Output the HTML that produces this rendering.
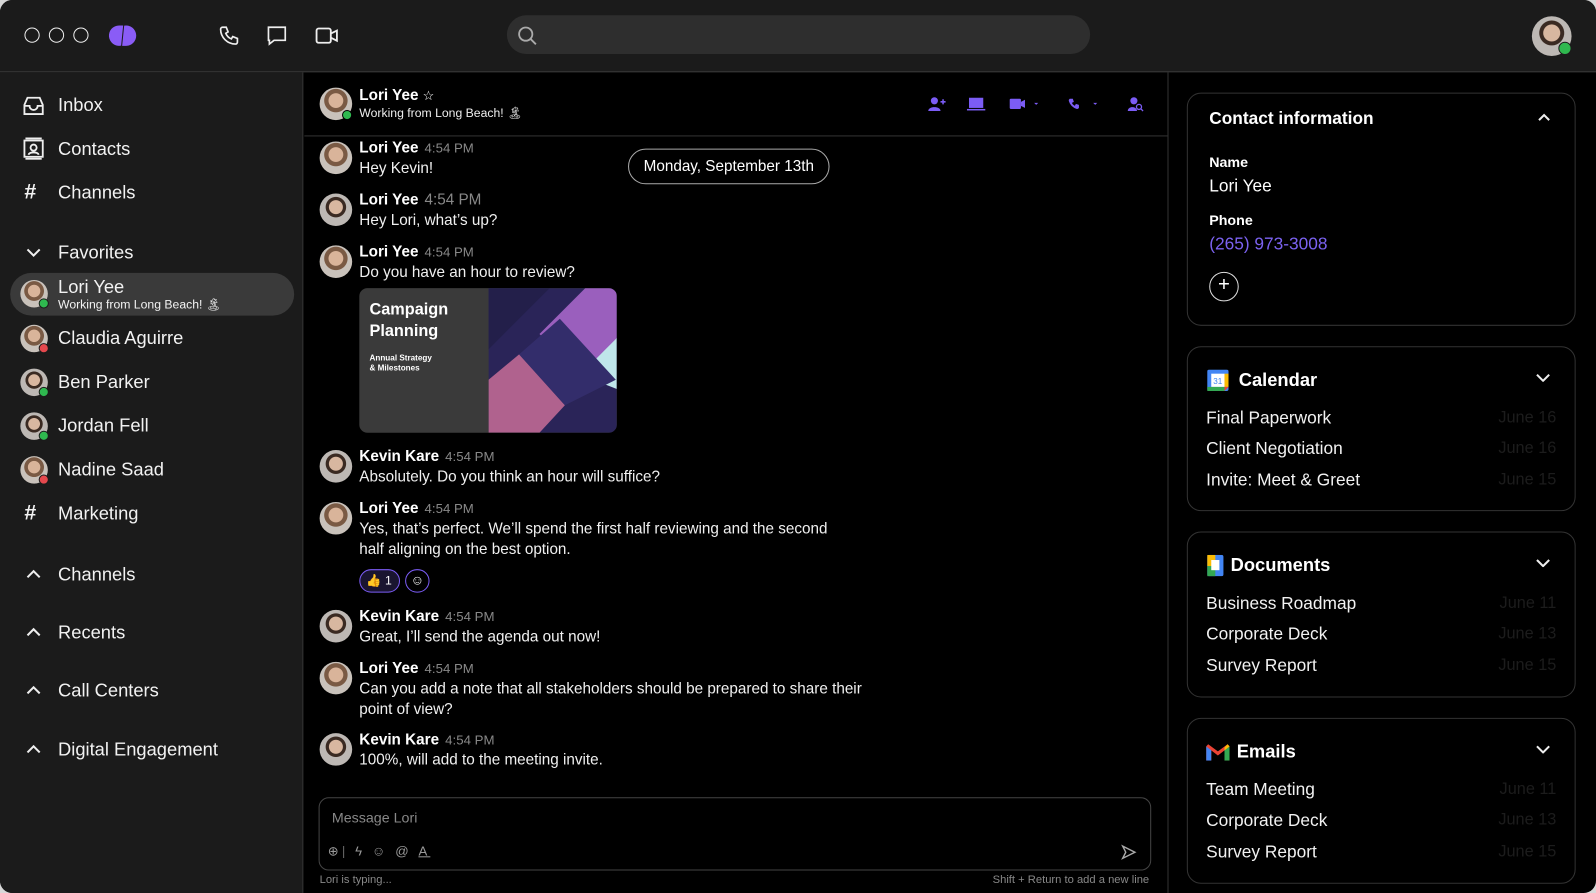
<!DOCTYPE html>
<html><head><meta charset="utf-8">
<style>
*{box-sizing:border-box;margin:0;padding:0}
html,body{width:1596px;height:893px;overflow:hidden;background:#d8d8d8}
body{font-family:"Liberation Sans",sans-serif;color:#fff}
#app{position:absolute;left:0;top:0;width:1568px;height:877px;transform:scale(1.01786,1.0182);transform-origin:0 0;background:#000;border-radius:12px;overflow:hidden}
.abs{position:absolute}
#top{left:0;top:0;width:1568px;height:71px;background:#1b1b1b;border-bottom:1px solid #3a3a3a}
#side{left:0;top:71px;width:298px;height:806px;background:#1b1b1b;border-right:1px solid #333}
.tl{width:15px;height:15px;border:1.5px solid #eee;border-radius:50%;top:27px}
.si{position:absolute;left:57px;font-size:18px;color:#f2f2f2}
.sic{position:absolute;left:22px}
.av{position:absolute;border-radius:50%;background:radial-gradient(circle at 50% 40%,#d9b49a 0 28%,#7a5a44 30% 45%,#c9c2bb 47%)}
.avm{background:radial-gradient(circle at 50% 42%,#d8b7a0 0 27%,#3a2a22 29% 40%,#bdb8b4 42%)}
.dot{position:absolute;width:10px;height:10px;border-radius:50%;border:1.5px solid #1b1b1b}
.g{background:#2fb84f}.r{background:#e5484d}
.msg{position:absolute;left:313px}
.msg .nm{position:absolute;left:40px;top:0;font-size:15px;font-weight:bold;white-space:nowrap}
.msg .nm span{font-weight:normal;color:#888;font-size:13px;margin-left:6px}
.msg .tx{position:absolute;left:40px;top:19px;font-size:15px;line-height:20px;white-space:nowrap;color:#f0f0f0}
.card{position:absolute;left:1166px;width:382px;border:1px solid #333;border-radius:14px}
.ct{position:absolute;top:22px;font-size:18px;font-weight:bold}
.row{position:absolute;left:18px;font-size:17px;color:#f2f2f2}
.dt{position:absolute;right:18px;font-size:16px;color:#1c1c1c}
.chev{position:absolute;right:24px;top:26px}
</style></head><body>
<div id="app">
<div id="top" class="abs">
 <div class="abs tl" style="left:24px"></div><div class="abs tl" style="left:48px"></div><div class="abs tl" style="left:72px"></div>
 <svg class="abs" style="left:104px;top:23px" width="34" height="24" viewBox="0 0 34 24"><path d="M13 2a10 10 0 1 0 2 19.8L17 2z" fill="#8a5cf6"/><path d="M18 2.2A10 10 0 1 1 19 22h-3z" fill="#8a5cf6"/></svg>
 <svg class="abs" style="left:214px;top:24px" width="22" height="22" viewBox="0 0 24 24" fill="none" stroke="#eee" stroke-width="1.8"><path d="M5 3h4l2 5-2.5 1.5a11 11 0 0 0 6 6L16 13l5 2v4a2 2 0 0 1-2 2A16 16 0 0 1 3 5a2 2 0 0 1 2-2z"/></svg>
 <svg class="abs" style="left:261px;top:24px" width="22" height="22" viewBox="0 0 24 24" fill="none" stroke="#eee" stroke-width="1.8"><path d="M3 3h18v14H9l-5 4v-4H3z"/></svg>
 <svg class="abs" style="left:309px;top:25px" width="24" height="20" viewBox="0 0 24 20" fill="none" stroke="#eee" stroke-width="1.8"><rect x="2" y="3" width="14" height="14" rx="2"/><path d="M16 8l6-3v10l-6-3"/></svg>
 <div class="abs" style="left:498px;top:15px;width:573px;height:38px;background:#2e2e2e;border-radius:19px"></div>
 <svg class="abs" style="left:508px;top:25px" width="20" height="20" viewBox="0 0 20 20" fill="none" stroke="#aaa" stroke-width="1.8"><circle cx="8.5" cy="8.5" r="6.5"/><path d="M13.5 13.5l5 5"/></svg>
 <div class="av avm" style="left:1505px;top:16px;width:39px;height:39px"></div><div class="dot g" style="left:1531px;top:41px;width:13px;height:13px"></div>
</div>
<div id="side" class="abs">
 <svg class="sic" style="top:23px" width="22" height="20" viewBox="0 0 22 20" fill="none" stroke="#eee" stroke-width="1.8"><path d="M2 9l3-7h12l3 7v9H2z"/><path d="M2 10h5a4 4 0 0 0 8 0h5"/></svg>
 <div class="si" style="top:22px">Inbox</div>
 <svg class="sic" style="top:64px" width="22" height="22" viewBox="0 0 22 22" fill="none" stroke="#eee" stroke-width="1.8"><rect x="2" y="3" width="18" height="16"/><circle cx="11" cy="10" r="3"/><path d="M6 17c1-3 9-3 10 0M3 1h16M3 21h16"/></svg>
 <div class="si" style="top:65px">Contacts</div>
 <div class="si" style="left:24px;top:106px;font-size:21px;font-weight:bold">#</div>
 <div class="si" style="top:108px">Channels</div>
 <svg class="sic" style="left:26px;top:172px" width="14" height="10" viewBox="0 0 14 10" fill="none" stroke="#eee" stroke-width="2"><path d="M1 2l6 6 6-6"/></svg>
 <div class="si" style="top:167px">Favorites</div>
 <div class="abs" style="left:10px;top:197px;width:279px;height:42px;background:#3a3a3a;border-radius:21px"></div>
 <div class="av" style="left:20px;top:204px;width:27px;height:27px"></div><div class="dot g" style="left:38px;top:222px"></div>
 <div class="si" style="top:201px">Lori Yee</div>
 <div class="si" style="top:221px;font-size:12px">Working from Long Beach! 🏝</div>
 <div class="av" style="left:20px;top:248px;width:27px;height:27px"></div><div class="dot r" style="left:38px;top:266px"></div>
 <div class="si" style="top:251px">Claudia Aguirre</div>
 <div class="av avm" style="left:20px;top:291px;width:27px;height:27px"></div><div class="dot g" style="left:38px;top:309px"></div>
 <div class="si" style="top:294px">Ben Parker</div>
 <div class="av avm" style="left:20px;top:334px;width:27px;height:27px"></div><div class="dot g" style="left:38px;top:352px"></div>
 <div class="si" style="top:337px">Jordan Fell</div>
 <div class="av" style="left:20px;top:377px;width:27px;height:27px"></div><div class="dot r" style="left:38px;top:395px"></div>
 <div class="si" style="top:380px">Nadine Saad</div>
 <div class="si" style="left:24px;top:421px;font-size:21px;font-weight:bold">#</div>
 <div class="si" style="top:423px">Marketing</div>
 <svg class="sic" style="left:26px;top:488px" width="14" height="10" viewBox="0 0 14 10" fill="none" stroke="#eee" stroke-width="2"><path d="M1 8l6-6 6 6"/></svg>
 <div class="si" style="top:483px">Channels</div>
 <svg class="sic" style="left:26px;top:545px" width="14" height="10" viewBox="0 0 14 10" fill="none" stroke="#eee" stroke-width="2"><path d="M1 8l6-6 6 6"/></svg>
 <div class="si" style="top:540px">Recents</div>
 <svg class="sic" style="left:26px;top:602px" width="14" height="10" viewBox="0 0 14 10" fill="none" stroke="#eee" stroke-width="2"><path d="M1 8l6-6 6 6"/></svg>
 <div class="si" style="top:597px">Call Centers</div>
 <svg class="sic" style="left:26px;top:660px" width="14" height="10" viewBox="0 0 14 10" fill="none" stroke="#eee" stroke-width="2"><path d="M1 8l6-6 6 6"/></svg>
 <div class="si" style="top:655px">Digital Engagement</div>
</div>
<!-- chat -->
<div class="abs" style="left:299px;top:133px;width:848px;height:1px;background:#333"></div>
<div class="abs" style="left:1147px;top:71px;width:1px;height:806px;background:#333"></div>
<div class="av" style="left:314px;top:86px;width:32px;height:32px"></div><div class="dot g" style="left:336px;top:108px;border-color:#000"></div>
<div class="abs" style="left:353px;top:85px;font-size:15px;font-weight:bold">Lori Yee <span style="font-weight:normal;font-size:13px">☆</span></div>
<div class="abs" style="left:353px;top:104px;font-size:12px;color:#eee">Working from Long Beach! 🏝</div>
<svg class="abs" style="left:910px;top:94px" width="220" height="18" viewBox="0 0 220 18" fill="#7b5cf5"><circle cx="8" cy="5" r="3.5"/><path d="M2 15c0-5 12-5 12 0z"/><path d="M14 6h5M16.5 3.5v5" stroke="#7b5cf5" stroke-width="1.5"/><rect x="42" y="2" width="14" height="10"/><rect x="40" y="13" width="18" height="1.5"/><rect x="82" y="3" width="11" height="10" rx="1"/><path d="M93 6l4-2v8l-4-2z"/><path d="M106 7h4l-2 2z"/><path d="M141 3h3l1 3-2 1a7 7 0 0 0 3 3l1-2 3 1v3a2 2 0 0 1-2 1 11 11 0 0 1-8-8 2 2 0 0 1 1-2z"/><path d="M164 7h4l-2 2z"/><circle cx="204" cy="5" r="3.5"/><path d="M198 15c0-5 9-5 9 0z"/><circle cx="209" cy="11" r="2.5" fill="none" stroke="#7b5cf5" stroke-width="1.3"/><path d="M211 13l2 2" stroke="#7b5cf5" stroke-width="1.3"/></svg>

<div class="abs" style="left:617px;top:146px;width:198px;height:35px;border:1px solid #aaa;border-radius:18px;font-size:15px;text-align:center;line-height:33px">Monday, September 13th</div>

<div class="msg" style="top:137px"><div class="av" style="left:1px;top:2px;width:32px;height:32px"></div><div class="nm">Lori Yee<span>4:54 PM</span></div><div class="tx">Hey Kevin!</div></div>
<div class="msg" style="top:188px"><div class="av avm" style="left:1px;top:2px;width:32px;height:32px"></div><div class="nm">Lori Yee<span style="font-size:15px">4:54 PM</span></div><div class="tx">Hey Lori, what’s up?</div></div>
<div class="msg" style="top:239px"><div class="av" style="left:1px;top:2px;width:32px;height:32px"></div><div class="nm">Lori Yee<span>4:54 PM</span></div><div class="tx">Do you have an hour to review?</div></div>
<div class="abs" style="left:353px;top:283px;width:253px;height:142px;border-radius:8px;overflow:hidden;background:#3a3a3a">
 <div class="abs" style="left:10px;top:11px;font-size:16px;font-weight:bold;line-height:21px">Campaign<br>Planning</div>
 <div class="abs" style="left:10px;top:64px;font-size:8px;font-weight:bold;line-height:10px">Annual Strategy<br>&amp; Milestones</div>
 <svg class="abs" style="left:127px;top:0" width="126" height="142" viewBox="0 0 126 142"><rect width="126" height="142" fill="#2a2458"/><path d="M50 45L95 0h31v50L90 85z" fill="#9a5fbd"/><path d="M90 85l36-36v50z" fill="#bfe6ea"/><path d="M0 90l30-25 45 50-25 27H0z" fill="#b0628e"/><path d="M30 65l40-35 55 60-50 25z" fill="#332d6b"/><path d="M0 0h60L0 60z" fill="#231f4a"/></svg>
</div>
<div class="msg" style="top:440px"><div class="av avm" style="left:1px;top:2px;width:32px;height:32px"></div><div class="nm">Kevin Kare<span>4:54 PM</span></div><div class="tx">Absolutely. Do you think an hour will suffice?</div></div>
<div class="msg" style="top:491px"><div class="av" style="left:1px;top:2px;width:32px;height:32px"></div><div class="nm">Lori Yee<span>4:54 PM</span></div><div class="tx">Yes, that’s perfect. We’ll spend the first half reviewing and the second<br>half aligning on the best option.</div></div>
<div class="abs" style="left:353px;top:559px;width:40px;height:23px;border:1.5px solid #7b5cf5;border-radius:12px;background:#1a1530;font-size:12px;line-height:20px;padding-left:6px">👍 1</div>
<div class="abs" style="left:398px;top:559px;width:24px;height:23px;border:1.5px solid #7b5cf5;border-radius:12px;font-size:13px;text-align:center;line-height:20px">☺</div>
<div class="msg" style="top:597px"><div class="av avm" style="left:1px;top:2px;width:32px;height:32px"></div><div class="nm">Kevin Kare<span>4:54 PM</span></div><div class="tx">Great, I’ll send the agenda out now!</div></div>
<div class="msg" style="top:648px"><div class="av" style="left:1px;top:2px;width:32px;height:32px"></div><div class="nm">Lori Yee<span>4:54 PM</span></div><div class="tx">Can you add a note that all stakeholders should be prepared to share their<br>point of view?</div></div>
<div class="msg" style="top:718px"><div class="av avm" style="left:1px;top:2px;width:32px;height:32px"></div><div class="nm">Kevin Kare<span>4:54 PM</span></div><div class="tx">100%, will add to the meeting invite.</div></div>

<div class="abs" style="left:313px;top:783px;width:818px;height:72px;border:1px solid #444;border-radius:10px"></div>
<div class="abs" style="left:326px;top:795px;font-size:14px;color:#888">Message Lori</div>
<div class="abs" style="left:322px;top:828px;font-size:13px;color:#999;letter-spacing:3px">⊕<span style="color:#666">|</span> ϟ ☺ @ <u>A</u></div>
<svg class="abs" style="left:1101px;top:829px" width="16" height="16" viewBox="0 0 16 16" fill="none" stroke="#aaa" stroke-width="1.4"><path d="M2 2l12 6-12 6 3-6z"/></svg>
<div class="abs" style="left:314px;top:858px;font-size:11px;color:#888">Lori is typing...</div>
<div class="abs" style="left:953px;top:858px;font-size:11px;color:#888;width:176px;text-align:right">Shift + Return to add a new line</div>

<!-- right panel -->
<div class="card" style="top:91px;height:229px">
 <div class="ct" style="left:21px;top:15px;font-size:17px">Contact information</div>
 <svg class="chev" style="top:19px" width="12" height="8" viewBox="0 0 12 8" fill="none" stroke="#eee" stroke-width="2"><path d="M1 7l5-5 5 5"/></svg>
 <div class="abs" style="left:21px;top:59px;font-size:14px;font-weight:bold">Name</div>
 <div class="abs" style="left:21px;top:81px;font-size:17px">Lori Yee</div>
 <div class="abs" style="left:21px;top:116px;font-size:14px;font-weight:bold">Phone</div>
 <div class="abs" style="left:21px;top:138px;font-size:17px;color:#7b62f0">(265) 973-3008</div>
 <div class="abs" style="left:21px;top:175px;width:29px;height:29px;border:1.5px solid #ddd;border-radius:50%;text-align:center;font-size:20px;line-height:25px">+</div>
</div>
<div class="card" style="top:340px;height:162px">
 <svg class="abs" style="left:19px;top:22px" width="21" height="21" viewBox="0 0 21 21"><rect width="21" height="21" rx="2" fill="#4285f4"/><rect x="4" y="4" width="13" height="13" fill="#fff"/><rect x="0" y="17" width="17" height="4" fill="#34a853"/><rect x="17" y="4" width="4" height="13" fill="#fbbc04"/><path d="M17 17h4l-4 4z" fill="#ea4335"/><text x="6" y="14" font-size="8" fill="#4285f4" font-family="Liberation Sans">31</text></svg>
 <div class="ct" style="left:50px">Calendar</div>
 <svg class="chev" width="14" height="8" viewBox="0 0 14 8" fill="none" stroke="#eee" stroke-width="2"><path d="M1 1l6 6 6-6"/></svg>
 <div class="row" style="top:60px">Final Paperwork</div><div class="dt" style="top:61px">June 16</div>
 <div class="row" style="top:90px">Client Negotiation</div><div class="dt" style="top:91px">June 16</div>
 <div class="row" style="top:121px">Invite: Meet &amp; Greet</div><div class="dt" style="top:122px">June 15</div>
</div>
<div class="card" style="top:522px;height:163px">
 <svg class="abs" style="left:19px;top:22px" width="16" height="21" viewBox="0 0 16 21"><rect width="16" height="21" rx="2" fill="#4285f4"/><rect x="0" y="0" width="8" height="11" fill="#fbbc04"/><rect x="0" y="11" width="8" height="10" fill="#34a853"/><rect x="4" y="5" width="8" height="10" fill="#fff"/></svg>
 <div class="ct" style="left:42px">Documents</div>
 <svg class="chev" width="14" height="8" viewBox="0 0 14 8" fill="none" stroke="#eee" stroke-width="2"><path d="M1 1l6 6 6-6"/></svg>
 <div class="row" style="top:60px">Business Roadmap</div><div class="dt" style="top:61px">June 11</div>
 <div class="row" style="top:90px">Corporate Deck</div><div class="dt" style="top:91px">June 13</div>
 <div class="row" style="top:121px">Survey Report</div><div class="dt" style="top:122px">June 15</div>
</div>
<div class="card" style="top:705px;height:163px">
 <svg class="abs" style="left:18px;top:24px" width="23" height="17" viewBox="0 0 23 17"><path d="M0 3v14h5V7l6.5 5L18 7v10h5V3l-2-2-9.5 7L2 1z" fill="#ea4335"/><path d="M0 3v14h5V7z" fill="#4285f4"/><path d="M18 7v10h5V3z" fill="#34a853"/><path d="M21 1l2 2-5 4V4z" fill="#fbbc04"/></svg>
 <div class="ct" style="left:48px">Emails</div>
 <svg class="chev" width="14" height="8" viewBox="0 0 14 8" fill="none" stroke="#eee" stroke-width="2"><path d="M1 1l6 6 6-6"/></svg>
 <div class="row" style="top:60px">Team Meeting</div><div class="dt" style="top:61px">June 11</div>
 <div class="row" style="top:90px">Corporate Deck</div><div class="dt" style="top:91px">June 13</div>
 <div class="row" style="top:121px">Survey Report</div><div class="dt" style="top:122px">June 15</div>
</div>
</div>
</body></html>
